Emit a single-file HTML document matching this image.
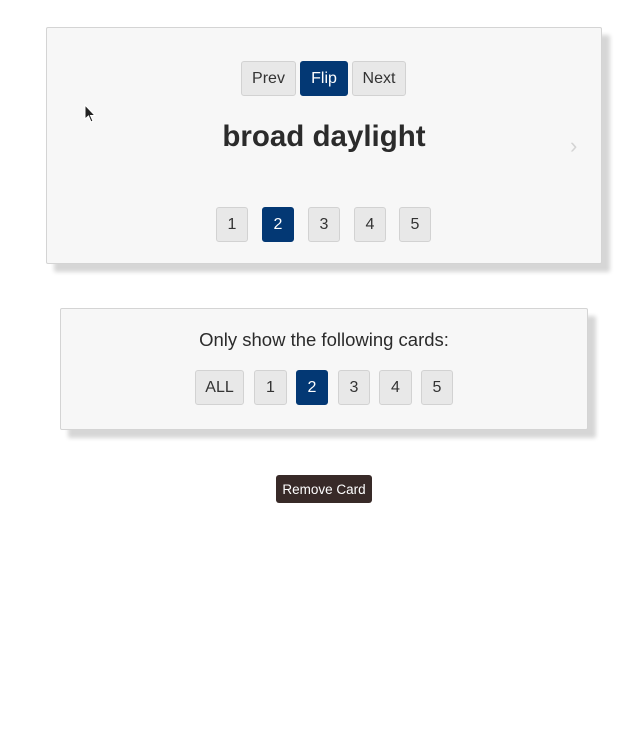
<!DOCTYPE html>
<html><head><style>
body{margin:0;background:#fff;font-family:"Liberation Sans",sans-serif;width:640px;height:740px;position:relative;overflow:hidden}
.card{position:absolute;background:#f7f7f7;border:1px solid #d4d4d4;border-radius:2px;box-shadow:8px 8px 4px #d6d6d6}
.b{position:absolute;box-sizing:border-box;background:#e8e8e8;border:1px solid #d2d2d2;border-radius:3px;color:#333;font-size:16px;display:flex;align-items:center;justify-content:center}
.a{background:#033874;border-color:#033874;color:#fff}
</style></head><body>
<div class="card" style="left:46px;top:27px;width:554px;height:235px"></div>
<div class="b" style="left:241px;top:61px;width:55px;height:35px">Prev</div>
<div class="b a" style="left:300px;top:61px;width:48px;height:35px">Flip</div>
<div class="b" style="left:352px;top:61px;width:54px;height:35px">Next</div>
<div style="position:absolute;left:0;width:648px;top:120px;text-align:center;font-weight:bold;font-size:29.5px;color:#2b2b2b">broad daylight</div>
<div style="position:absolute;left:570px;top:133px;font-size:22px;color:#d4d4d4">›</div>
<svg style="position:absolute;left:84px;top:104px" width="12" height="20"><path d="M1 1 L1 15 L4.5 12 L7 18 L9 17 L6.5 11.5 L11 11.5 Z" fill="#222" stroke="#fff" stroke-width="1"/></svg>
<div class="b" style="left:216px;top:207px;width:32px;height:35px">1</div>
<div class="b a" style="left:262px;top:207px;width:32px;height:35px">2</div>
<div class="b" style="left:308px;top:207px;width:32px;height:35px">3</div>
<div class="b" style="left:354px;top:207px;width:32px;height:35px">4</div>
<div class="b" style="left:399px;top:207px;width:32px;height:35px">5</div>

<div class="card" style="left:60px;top:308px;width:526px;height:120px"></div>
<div style="position:absolute;left:60px;width:528px;top:329px;text-align:center;font-size:18.5px;color:#2b2b2b">Only show the following cards:</div>
<div class="b" style="left:195px;top:370px;width:49px;height:35px">ALL</div>
<div class="b" style="left:254px;top:370px;width:33px;height:35px">1</div>
<div class="b a" style="left:296px;top:370px;width:32px;height:35px">2</div>
<div class="b" style="left:338px;top:370px;width:32px;height:35px">3</div>
<div class="b" style="left:379px;top:370px;width:33px;height:35px">4</div>
<div class="b" style="left:421px;top:370px;width:32px;height:35px">5</div>

<div style="position:absolute;left:276px;top:475px;width:96px;height:28px;background:#382a28;border-radius:3px;color:#fff;font-size:13.5px;display:flex;align-items:center;justify-content:center">Remove Card</div>
</body></html>
